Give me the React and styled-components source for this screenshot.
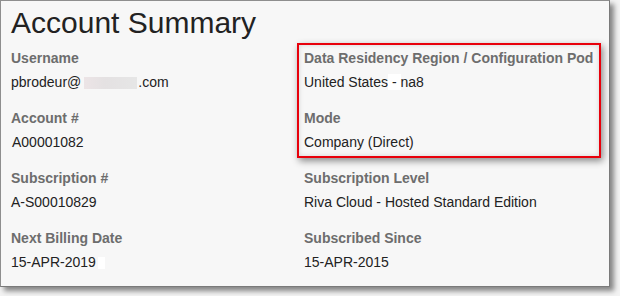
import React from "react";
import styled, { createGlobalStyle } from "styled-components";

const Global = createGlobalStyle`
  html, body { margin: 0; padding: 0; background: #f3f3f3; }
  body { font-family: "Liberation Sans", Arial, sans-serif; }
`;

const Page = styled.div`
  width: 620px;
  height: 296px;
  overflow: hidden;
`;

const Panel = styled.section`
  box-sizing: border-box;
  width: 610px;
  height: 287px;
  background: #f7f7f7;
  border: 1px solid #8e8e8e;
  border-right-color: #7a7a7a;
  border-bottom-color: #7a7a7a;
  box-shadow: 4px 4px 5px rgba(0, 0, 0, 0.45);
  padding: 4px 0 0 10px;
  display: flex;
  flex-direction: column;
  gap: 7px;
`;

const Title = styled.h1`
  margin: 0;
  font-size: 30px;
  line-height: 36px;
  font-weight: 400;
  color: #222;
`;

const Columns = styled.div`
  display: grid;
  grid-template-columns: 293px 1fr;
`;

const Column = styled.div`
  display: flex;
  flex-direction: column;
  gap: 16px;
`;

const Field = styled.div`
  display: flex;
  flex-direction: column;
  gap: 4px;
`;

const Label = styled.div`
  font-size: 14px;
  line-height: 20px;
  font-weight: 700;
  color: #6d6d6d;
  white-space: nowrap;
`;

const Value = styled.div`
  font-size: 14px;
  line-height: 20px;
  color: #222;
  white-space: nowrap;
  padding-left: ${(p) => p.$indent || 0}px;
`;

const Highlight = styled.div`
  box-sizing: border-box;
  width: 304px;
  margin: -5px 0 -6px -7px;
  padding: 3px 5px 4px 5px;
  border: 2px solid #e8000b;
  box-shadow: 2px 3px 7px rgba(0, 0, 0, 0.45), inset 0 0 5px rgba(0, 0, 0, 0.14);
  display: flex;
  flex-direction: column;
  gap: 16px;
`;

const Redacted = styled.span`
  display: inline-block;
  width: 53px;
  height: 12px;
  margin: 0 1px 0 3px;
  vertical-align: -2px;
  background: linear-gradient(90deg, #ece4e6, #e4e1e2 40%, #e6e6e6);
  filter: blur(0.6px);
`;

const WhiteMark = styled.span`
  display: inline-block;
  width: 7px;
  height: 12px;
  margin-left: 2px;
  vertical-align: -2px;
  background: #fff;
`;

const WhiteBg = styled.span`
  background: #fff;
`;

export default function App() {
  return (
    <Page>
      <Global />
      <Panel>
        <Title>Account Summary</Title>
        <Columns>
          <Column>
            <Field>
              <Label>Username</Label>
              <Value>
                pbrodeur@<Redacted />.com
              </Value>
            </Field>
            <Field>
              <Label>Account #</Label>
              <Value $indent={1}>A00001082</Value>
            </Field>
            <Field>
              <Label>Subscription #</Label>
              <Value>A-S00010829</Value>
            </Field>
            <Field>
              <Label>Next Billing Date</Label>
              <Value>
                15-APR-2019<WhiteMark />
              </Value>
            </Field>
          </Column>
          <Column>
            <Highlight>
              <Field>
                <Label>Data Residency Region / Configuration Pod</Label>
                <Value>
                  United States<WhiteBg> - </WhiteBg>na8
                </Value>
              </Field>
              <Field>
                <Label>Mode</Label>
                <Value>Company (Direct)</Value>
              </Field>
            </Highlight>
            <Field>
              <Label>Subscription Level</Label>
              <Value>Riva Cloud - Hosted Standard Edition</Value>
            </Field>
            <Field>
              <Label>Subscribed Since</Label>
              <Value>15-APR-2015</Value>
            </Field>
          </Column>
        </Columns>
      </Panel>
    </Page>
  );
}
